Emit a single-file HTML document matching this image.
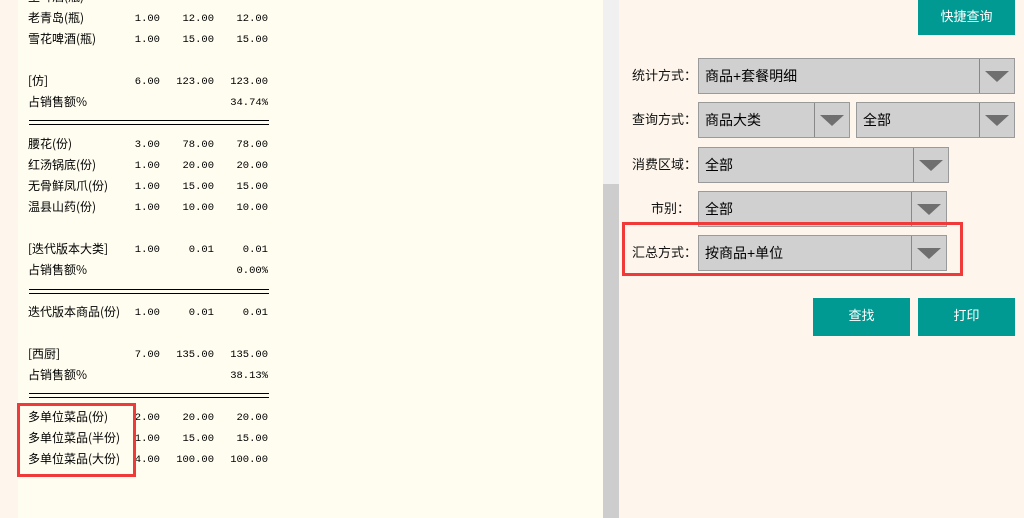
<!DOCTYPE html>
<html><head><meta charset="utf-8"><style>
*{margin:0;padding:0;box-sizing:border-box}
body{width:1024px;height:518px;overflow:hidden;background:#fef6ec;position:relative;font-family:"Liberation Sans","Noto Sans CJK SC",sans-serif}
.rec{position:absolute;left:18px;top:0;width:585px;height:518px;background:#fffdf0}
.sb{position:absolute;left:603px;top:0;width:16px;height:518px;background:#f0f0f0}
.th{position:absolute;left:603px;top:184px;width:16px;height:334px;background:#cdcdcd}
.r{position:absolute;left:28px;height:21px;line-height:21px;font-size:12px;color:#000;width:242px;font-family:"WenQuanYi Zen Hei","Noto Sans CJK SC",sans-serif}
.r span{position:absolute;top:2px;line-height:21px;font-family:"Liberation Mono",monospace;font-size:10.5px;text-align:right}
.a{right:110px}.b{right:56px}.c{right:2px}
.dl{position:absolute;left:29px;width:240px;height:5px;border-top:1.5px solid #000;border-bottom:1.5px solid #000}
.red{position:absolute;border:3px solid #f03a3a}
.btn{position:absolute;background:#009a93;color:#fff;font-size:13px;text-align:center;font-family:"Liberation Sans","Noto Sans CJK SC",sans-serif}
.lb{position:absolute;width:80px;text-align:right;font-size:13px;color:#111;line-height:16px}
.sel{position:absolute;background:#d0d0d0;border:1px solid #9a9a9a;font-size:14px;color:#000;padding-left:6px}
.sel i{position:absolute;top:0;right:0;bottom:0;border-left:1px solid #888}
.sel i:after{content:"";position:absolute;left:50%;top:50%;margin:-5px 0 0 -12px;border-left:12px solid transparent;border-right:12px solid transparent;border-top:11px solid #6f6f6f}
</style></head><body>
<div class="rec"></div>
<div class="r" style="top:-14px">生啤酒(瓶)<span class="a">6.00</span><span class="b">00.00</span><span class="c">00.00</span></div>
<div class="r" style="top:7px">老青岛(瓶)<span class="a">1.00</span><span class="b">12.00</span><span class="c">12.00</span></div>
<div class="r" style="top:28px">雪花啤酒(瓶)<span class="a">1.00</span><span class="b">15.00</span><span class="c">15.00</span></div>
<div class="r" style="top:70px">[仿]<span class="a">6.00</span><span class="b">123.00</span><span class="c">123.00</span></div>
<div class="r" style="top:91px">占销售额%<span class="c">34.74%</span></div>
<div class="dl" style="top:120px"></div>
<div class="r" style="top:133px">腰花(份)<span class="a">3.00</span><span class="b">78.00</span><span class="c">78.00</span></div>
<div class="r" style="top:154px">红汤锅底(份)<span class="a">1.00</span><span class="b">20.00</span><span class="c">20.00</span></div>
<div class="r" style="top:175px">无骨鲜凤爪(份)<span class="a">1.00</span><span class="b">15.00</span><span class="c">15.00</span></div>
<div class="r" style="top:196px">温县山药(份)<span class="a">1.00</span><span class="b">10.00</span><span class="c">10.00</span></div>
<div class="r" style="top:238px">[迭代版本大类]<span class="a">1.00</span><span class="b">0.01</span><span class="c">0.01</span></div>
<div class="r" style="top:259px">占销售额%<span class="c">0.00%</span></div>
<div class="dl" style="top:289px"></div>
<div class="r" style="top:301px">迭代版本商品(份)<span class="a">1.00</span><span class="b">0.01</span><span class="c">0.01</span></div>
<div class="r" style="top:343px">[西厨]<span class="a">7.00</span><span class="b">135.00</span><span class="c">135.00</span></div>
<div class="r" style="top:364px">占销售额%<span class="c">38.13%</span></div>
<div class="dl" style="top:393px"></div>
<div class="r" style="top:406px">多单位菜品(份)<span class="a">2.00</span><span class="b">20.00</span><span class="c">20.00</span></div>
<div class="r" style="top:427px">多单位菜品(半份)<span class="a">1.00</span><span class="b">15.00</span><span class="c">15.00</span></div>
<div class="r" style="top:448px">多单位菜品(大份)<span class="a">4.00</span><span class="b">100.00</span><span class="c">100.00</span></div>
<div class="red" style="left:17px;top:403px;width:119px;height:74px"></div>
<div class="sb"></div><div class="th"></div>

<div class="btn" style="left:918px;top:0;width:97px;height:35px;line-height:33px">快捷查询</div>
<div class="lb" style="left:617px;top:68px">统计方式：</div>
<div class="sel" style="left:698px;top:58px;width:317px;height:36px;line-height:34px">商品+套餐明细<i style="width:35px"></i></div>
<div class="lb" style="left:617px;top:112px">查询方式：</div>
<div class="sel" style="left:698px;top:102px;width:152px;height:36px;line-height:34px">商品大类<i style="width:35px"></i></div>
<div class="sel" style="left:856px;top:102px;width:159px;height:36px;line-height:34px">全部<i style="width:35px"></i></div>
<div class="lb" style="left:617px;top:157px">消费区域：</div>
<div class="sel" style="left:698px;top:147px;width:251px;height:36px;line-height:34px">全部<i style="width:35px"></i></div>
<div class="lb" style="left:610px;top:201px">市别：</div>
<div class="sel" style="left:698px;top:191px;width:249px;height:36px;line-height:34px">全部<i style="width:35px"></i></div>
<div class="lb" style="left:617px;top:245px">汇总方式：</div>
<div class="sel" style="left:698px;top:235px;width:249px;height:36px;line-height:34px">按商品+单位<i style="width:35px"></i></div>
<div class="red" style="left:622px;top:222px;width:341px;height:54px"></div>
<div class="btn" style="left:813px;top:298px;width:97px;height:38px;line-height:36px">查找</div>
<div class="btn" style="left:918px;top:298px;width:97px;height:38px;line-height:36px">打印</div>
</body></html>
